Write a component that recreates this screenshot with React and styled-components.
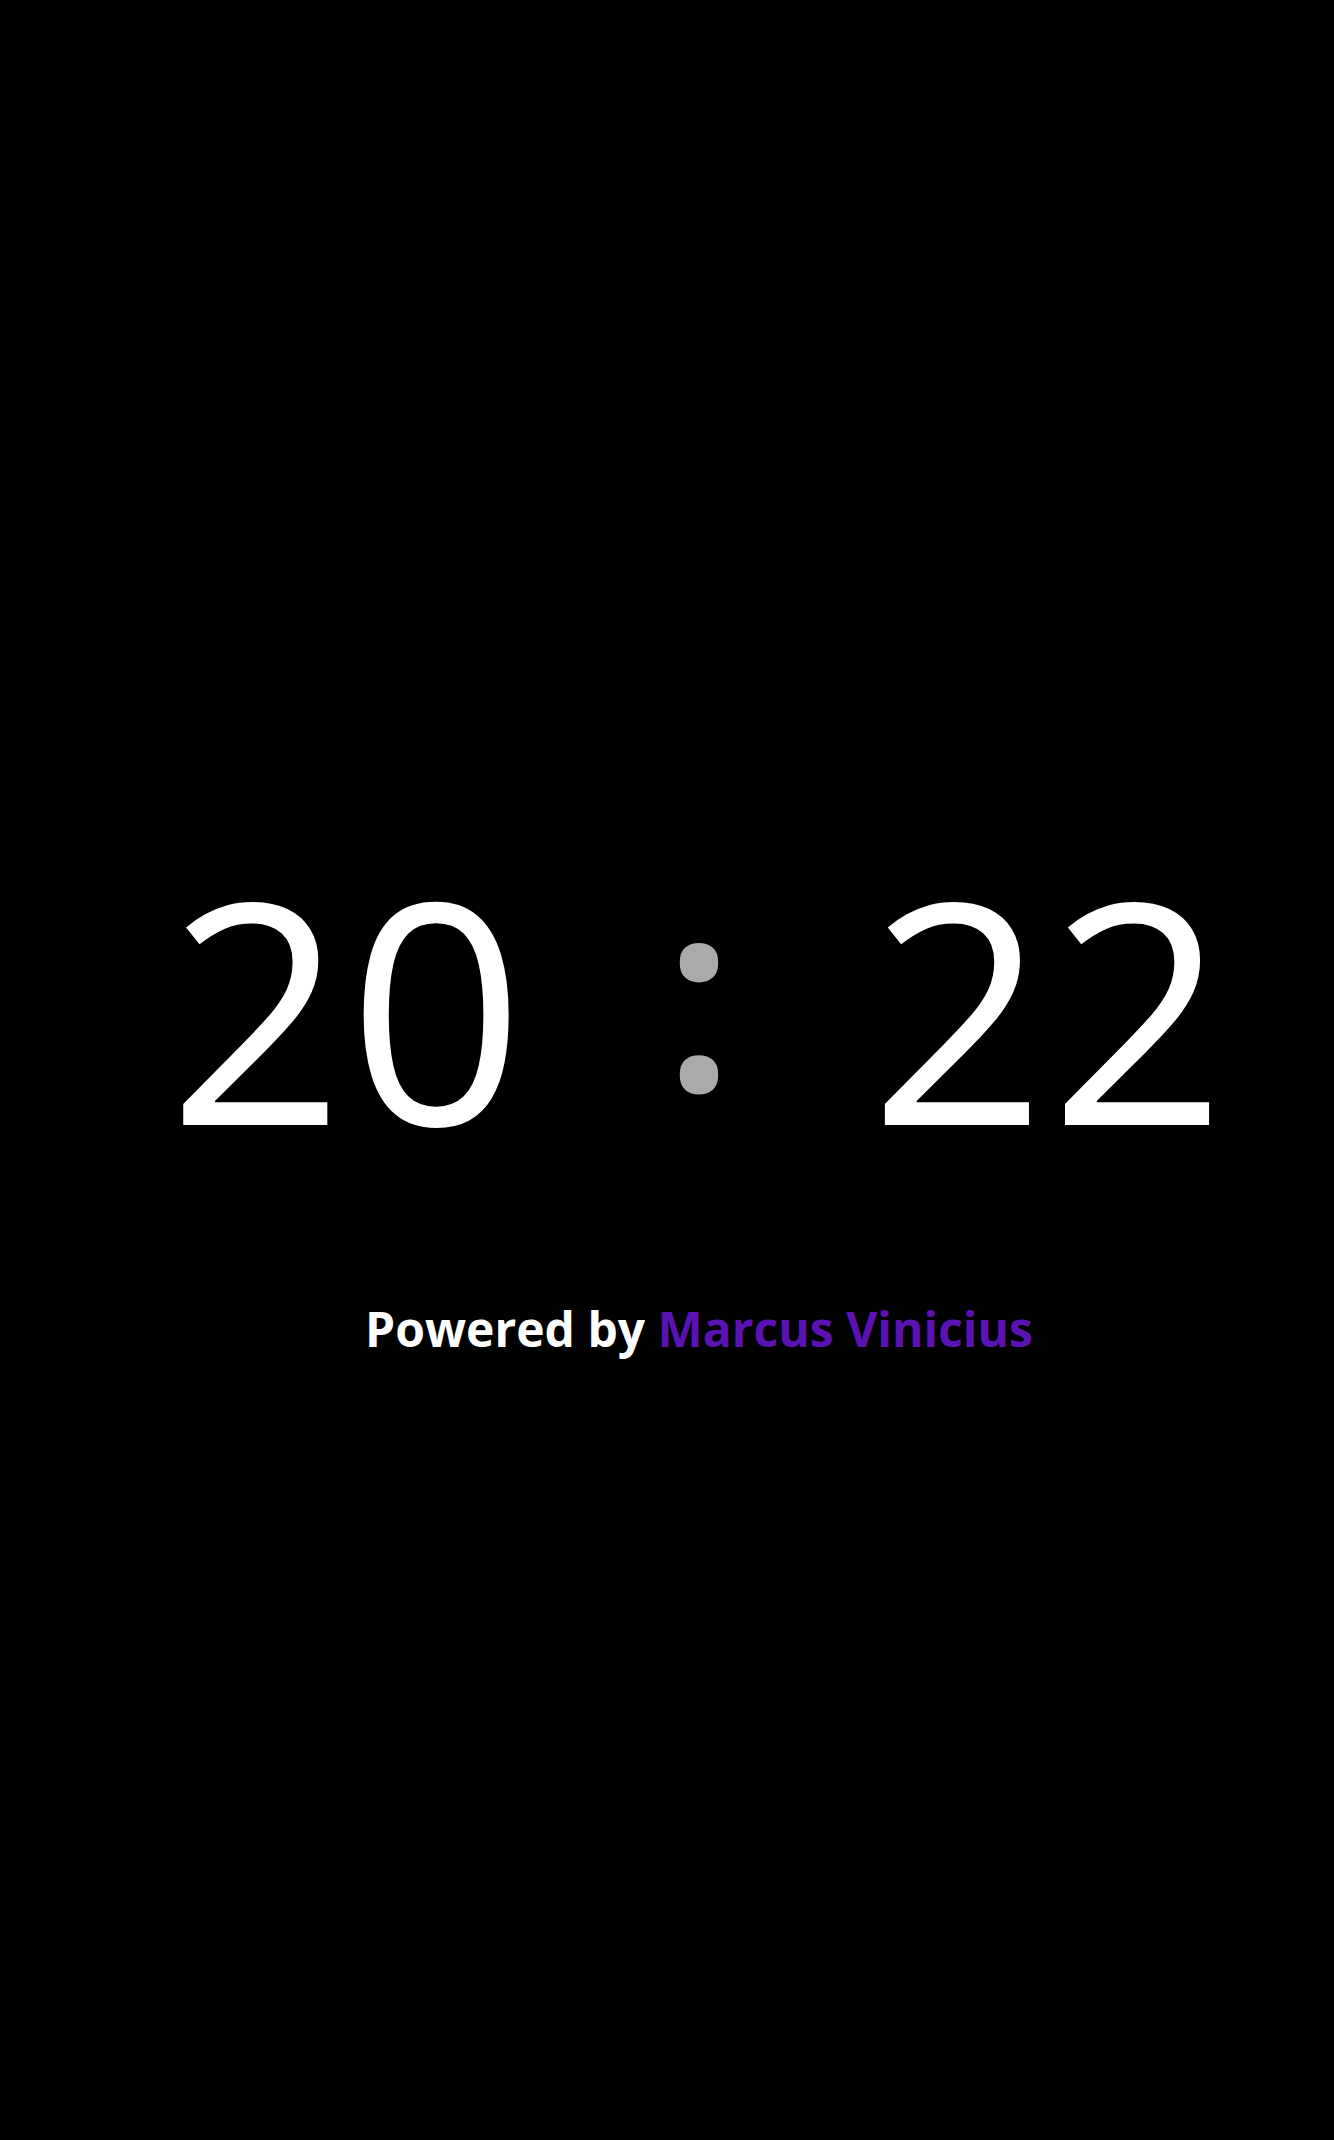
import React from "react";
import styled, { createGlobalStyle } from "styled-components";

const GlobalStyle = createGlobalStyle`
  html, body {
    margin: 0;
    padding: 0;
    background: #000;
  }
`;

const Page = styled.main`
  min-height: 2140px;
  background: #000;
  display: flex;
  flex-direction: column;
  align-items: center;
  padding: 852px 0 0 64px;
  box-sizing: border-box;
  font-family: "Open Sans", "Noto Sans", sans-serif;
`;

const Clock = styled.div`
  display: flex;
  align-items: flex-end;
  gap: 134px;
  line-height: 1;
`;

const Digits = styled.span`
  font-size: 308px;
  color: #fff;
  letter-spacing: 4px;
`;

const Colon = styled.span`
  font-size: 268px;
  font-weight: 600;
  color: #aaa;
  padding-bottom: 38px;
`;

const Credit = styled.p`
  margin: 136px 0 0;
  font-size: 48px;
  font-weight: 700;
  color: #fff;
`;

const Author = styled.span`
  color: #5a12b3;
`;

const App = () => {
  return (
    <>
      <GlobalStyle />
      <Page>
        <Clock>
          <Digits>20</Digits>
          <Colon>:</Colon>
          <Digits>22</Digits>
        </Clock>
        <Credit>
          Powered by <Author>Marcus Vinicius</Author>
        </Credit>
      </Page>
    </>
  );
};

export default App;
